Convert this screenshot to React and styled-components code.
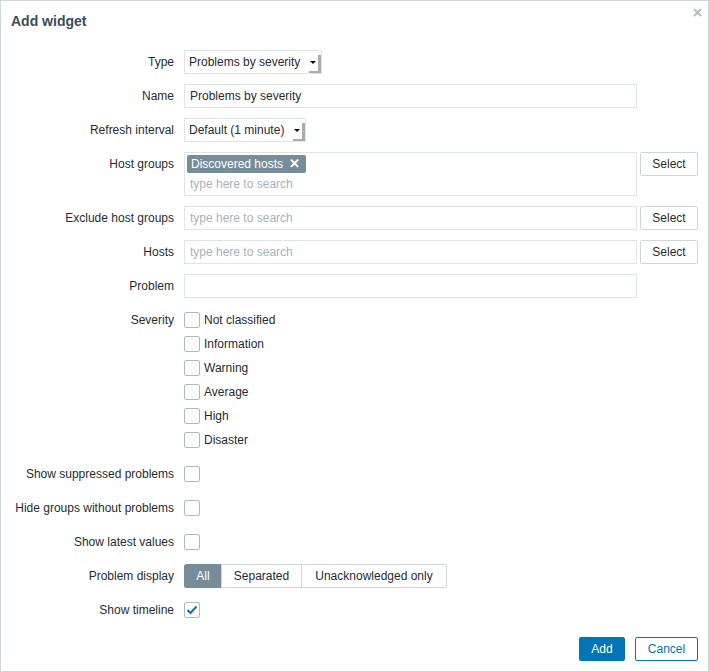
import React from "react";
import styled, { createGlobalStyle } from "styled-components";

const Global = createGlobalStyle`
  html, body { margin: 0; padding: 0; background: #fff; }
  body { font-family: "Liberation Sans", Arial, sans-serif; font-size: 12px; color: #1f2c33; }
  * { box-sizing: border-box; }
`;

const Dialog = styled.div`
  position: relative;
  width: 709px;
  height: 672px;
  border: 1px solid #cfd7db;
  display: flex;
  flex-direction: column;
  background: #fff;
`;

const Header = styled.div`
  padding: 10px 10px;
`;

const Title = styled.h4`
  margin: 0;
  font-size: 14px;
  line-height: 20px;
  font-weight: bold;
  color: #3b4d5a;
`;

const Close = styled.button`
  position: absolute;
  top: 5px;
  right: 5px;
  width: 12px;
  height: 12px;
  padding: 0;
  border: 0;
  background: transparent;
  display: flex;
  align-items: center;
  justify-content: center;
`;

const Form = styled.div`
  margin-top: 9px;
  padding: 0 10px 0 9px;
  display: grid;
  grid-template-columns: 164px 1fr;
  column-gap: 10px;
  row-gap: 10px;
`;

const Label = styled.div`
  text-align: right;
  line-height: 24px;
  white-space: nowrap;
  align-self: start;
`;

const Field = styled.div`
  display: flex;
  align-items: flex-start;
  gap: 3px;
  min-height: 24px;
`;

const SelectBox = styled.div`
  position: relative;
  width: ${(p) => p.$w}px;
  height: 24px;
  border: 1px solid #dfe4e7;
  background: #fff;
  padding-left: 4px;
  line-height: 22px;
  white-space: nowrap;
`;

const Arrow = styled.span`
  position: absolute;
  right: 0;
  top: 4px;
  bottom: 0;
  width: 12px;
  border-right: 3px solid #a9adb0;
  border-bottom: 2px solid #a9adb0;
  display: flex;
  align-items: center;
  justify-content: center;
  &::before {
    content: "";
    width: 0;
    height: 0;
    margin-top: -2px;
    margin-left: -1px;
    border-left: 3px solid transparent;
    border-right: 3px solid transparent;
    border-top: 3px solid #000;
  }
`;

const Input = styled.div`
  width: 453px;
  height: ${(p) => (p.$tall ? 44 : 24)}px;
  border: 1px solid #dfe4e7;
  background: #fff;
  padding: ${(p) => (p.$tall ? "2px 2px 0" : "0 5px")};
  line-height: 22px;
  white-space: nowrap;
`;

const Placeholder = styled.span`
  color: #a6b3ba;
  padding-left: ${(p) => (p.$inset ? 3 : 0)}px;
  line-height: 22px;
  display: block;
`;

const Tag = styled.span`
  display: flex;
  width: fit-content;
  align-items: center;
  gap: 6px;
  height: 18px;
  padding: 0 6px 0 4px;
  background: #768d99;
  color: #fff;
  border-radius: 2px;
  line-height: 18px;
`;

const TagX = styled.span`
  font-weight: bold;
  font-size: 13px;
  line-height: 18px;
`;

const Button = styled.button`
  height: 24px;
  width: ${(p) => p.$w}px;
  padding: 0;
  font-family: inherit;
  font-size: 12px;
  border-radius: 2px;
  cursor: pointer;
  flex-shrink: 0;
  ${(p) =>
    p.$variant === "primary"
      ? "background: #0275b8; border: 1px solid #0275b8; color: #fff;"
      : p.$variant === "alt"
      ? "background: #fff; border: 1px solid #0275b8; color: #0275b8;"
      : "background: #fff; border: 1px solid #cfd7db; color: #1f2c33;"}
`;

const CheckList = styled.div`
  display: flex;
  flex-direction: column;
`;

const CheckRow = styled.label`
  display: flex;
  align-items: center;
  gap: 4px;
  height: 24px;
`;

const Box = styled.span`
  width: 16px;
  height: 16px;
  border: 1px solid #acbbc2;
  border-radius: 2px;
  background: #fff;
  display: flex;
  align-items: center;
  justify-content: center;
`;

const BoxField = styled.div`
  height: 24px;
  display: flex;
  align-items: center;
`;

const Segmented = styled.div`
  display: flex;
  height: 24px;
`;

const Segment = styled.span`
  height: 24px;
  line-height: 22px;
  width: ${(p) => p.$w}px;
  text-align: center;
  border: 1px solid ${(p) => (p.$active ? "#768d99" : "#cfd7db")};
  margin-left: ${(p) => (p.$first ? 0 : -1)}px;
  background: ${(p) => (p.$active ? "#768d99" : "#fff")};
  color: ${(p) => (p.$active ? "#fff" : "#1f2c33")};
  border-radius: ${(p) => (p.$first ? "2px 0 0 2px" : p.$last ? "0 2px 2px 0" : "0")};
  white-space: nowrap;
`;

const Footer = styled.div`
  margin-top: auto;
  padding: 0 10px 10px;
  display: flex;
  justify-content: flex-end;
  gap: 10px;
`;

const Check = () => (
  <svg width="12" height="10" viewBox="0 0 12 10">
    <path d="M1.5 5 L4.5 8 L10.5 1.5" fill="none" stroke="#0275b8" strokeWidth="2" />
  </svg>
);

const severities = ["Not classified", "Information", "Warning", "Average", "High", "Disaster"];

export default function App() {
  return (
    <>
      <Global />
      <Dialog>
        <Header>
          <Title>Add widget</Title>
        </Header>
        <Close aria-label="Close">
          <svg width="9" height="9" viewBox="0 0 9 9">
            <path d="M1 1 L8 8 M8 1 L1 8" stroke="#b4bec4" strokeWidth="2" />
          </svg>
        </Close>
        <Form>
          <Label>Type</Label>
          <Field>
            <SelectBox $w={138}>
              Problems by severity
              <Arrow />
            </SelectBox>
          </Field>

          <Label>Name</Label>
          <Field>
            <Input>Problems by severity</Input>
          </Field>

          <Label>Refresh interval</Label>
          <Field>
            <SelectBox $w={122}>
              Default (1 minute)
              <Arrow />
            </SelectBox>
          </Field>

          <Label>Host groups</Label>
          <Field>
            <Input $tall>
              <Tag>
                Discovered hosts <TagX>✕</TagX>
              </Tag>
              <Placeholder $inset>type here to search</Placeholder>
            </Input>
            <Button $w={58}>Select</Button>
          </Field>

          <Label>Exclude host groups</Label>
          <Field>
            <Input>
              <Placeholder>type here to search</Placeholder>
            </Input>
            <Button $w={58}>Select</Button>
          </Field>

          <Label>Hosts</Label>
          <Field>
            <Input>
              <Placeholder>type here to search</Placeholder>
            </Input>
            <Button $w={58}>Select</Button>
          </Field>

          <Label>Problem</Label>
          <Field>
            <Input />
          </Field>

          <Label>Severity</Label>
          <CheckList>
            {severities.map((s) => (
              <CheckRow key={s}>
                <Box />
                {s}
              </CheckRow>
            ))}
          </CheckList>

          <Label>Show suppressed problems</Label>
          <BoxField>
            <Box />
          </BoxField>

          <Label>Hide groups without problems</Label>
          <BoxField>
            <Box />
          </BoxField>

          <Label>Show latest values</Label>
          <BoxField>
            <Box />
          </BoxField>

          <Label>Problem display</Label>
          <Segmented>
            <Segment $active $first $w={38}>All</Segment>
            <Segment $w={81}>Separated</Segment>
            <Segment $last $w={146}>Unacknowledged only</Segment>
          </Segmented>

          <Label>Show timeline</Label>
          <BoxField>
            <Box>
              <Check />
            </Box>
          </BoxField>
        </Form>
        <Footer>
          <Button $variant="primary" $w={46}>Add</Button>
          <Button $variant="alt" $w={63}>Cancel</Button>
        </Footer>
      </Dialog>
    </>
  );
}
